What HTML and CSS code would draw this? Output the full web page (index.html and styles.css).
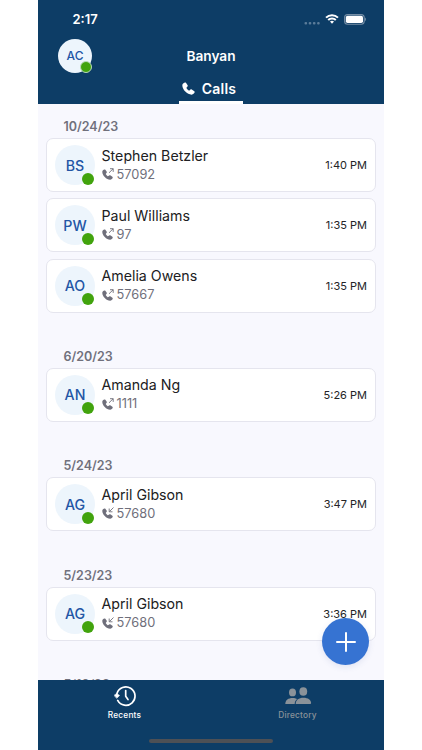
FILE: index.html
```html
<!DOCTYPE html>
<html lang="en">
<head>
  <meta charset="UTF-8">
  <title>Banyan - Calls</title>
  <link rel="stylesheet" href="styles.css">
</head>
<body>

  <!-- shared icons -->
  <svg class="icon-defs" aria-hidden="true">
    <symbol id="handset" viewBox="0 0 24 24">
      <path d="M5.200 1C3.200 1.700.6 3.600.6 6.200c0 8.200 9 17.200 17.200 17.200 2.600 0 4.900-2.300 5.600-4.300.3-.9 0-1.700-.7-2.200l-4.700-3.200c-.8-.5-1.700-.4-2.400.3l-1.700 1.500c-.5.4-1 .4-1.500.1-1.500-.9-3.100-2.500-4-4-.3-.5-.3-1 .1-1.500L10.100 8.400c.7-.7.8-1.600.3-2.400L7.300 1.600C6.800.9 6.100.7 5.200 1z"/>
    </symbol>
    <symbol id="outgoing" viewBox="0 0 12 12">
      <use href="#handset" x="0" y="1" width="11" height="11"/>
      <path class="arrow" d="M7 4.800 L11.200 .7 M8 .7 H11.200 V3.900"/>
    </symbol>
    <symbol id="incoming" viewBox="0 0 12 12">
      <use href="#handset" x="0" y="1" width="11" height="11"/>
      <path class="arrow" d="M11.500 .5 L7.500 4.500 M7.200 1.500 V4.800 H10.500"/>
    </symbol>
  </svg>

  <div class="phone">
    <header>
      <div class="status-bar">
        <span class="clock">2:17</span>
        <svg class="dots" viewBox="0 0 16 4" width="16" height="4">
          <rect x="0.500" y="1" width="2.600" height="2.400" rx="1"/>
          <rect x="4.700" y="1" width="2.600" height="2.400" rx="1"/>
          <rect x="8.900" y="1" width="2.600" height="2.400" rx="1"/>
          <rect x="13.100" y="1" width="2.600" height="2.400" rx="1"/>
        </svg>
        <svg class="wifi" viewBox="0 0 14 10" width="14" height="10">
          <path d="M1 3.600 A8.600 8.600 0 0 1 13 3.600"/>
          <path d="M3.200 6 A5.400 5.400 0 0 1 10.800 6"/>
          <path class="solid" d="M5 7.600 A2.900 2.900 0 0 1 9 7.600 L7 9.800 Z"/>
        </svg>
        <svg class="battery" viewBox="0 0 23 11" width="23" height="11">
          <rect class="case" x=".6" y=".6" width="19.600" height="9.600" rx="3"/>
          <rect class="level" x="1.800" y="1.800" width="17.200" height="7.200" rx="1.800"/>
          <path class="tip" d="M21 3.600 C22.300 4.200 22.300 6.600 21 7.200 Z"/>
        </svg>
      </div>
      <div class="title-bar">
        <div class="avatar small">AC<i class="online"></i></div>
        <h1>Banyan</h1>
      </div>
      <div class="tab">
        <svg width="13" height="13"><use href="#handset"/></svg>
        <span>Calls</span>
      </div>
    </header>

    <main>
      <section>
        <h2>10/24/23</h2>
        <div class="card">
          <div class="avatar">BS<i class="online"></i></div>
          <div class="who">
            <div class="name">Stephen Betzler</div>
            <div class="number"><svg width="12" height="12"><use href="#outgoing"/></svg>57092</div>
          </div>
          <time>1:40 PM</time>
        </div>
        <div class="card">
          <div class="avatar">PW<i class="online"></i></div>
          <div class="who">
            <div class="name">Paul Williams</div>
            <div class="number"><svg width="12" height="12"><use href="#outgoing"/></svg>97</div>
          </div>
          <time>1:35 PM</time>
        </div>
        <div class="card">
          <div class="avatar">AO<i class="online"></i></div>
          <div class="who">
            <div class="name">Amelia Owens</div>
            <div class="number"><svg width="12" height="12"><use href="#outgoing"/></svg>57667</div>
          </div>
          <time>1:35 PM</time>
        </div>
      </section>

      <section>
        <h2>6/20/23</h2>
        <div class="card">
          <div class="avatar">AN<i class="online"></i></div>
          <div class="who">
            <div class="name">Amanda Ng</div>
            <div class="number"><svg width="12" height="12"><use href="#outgoing"/></svg>1111</div>
          </div>
          <time>5:26 PM</time>
        </div>
      </section>

      <section>
        <h2>5/24/23</h2>
        <div class="card">
          <div class="avatar">AG<i class="online"></i></div>
          <div class="who">
            <div class="name">April Gibson</div>
            <div class="number"><svg width="12" height="12"><use href="#incoming"/></svg>57680</div>
          </div>
          <time>3:47 PM</time>
        </div>
      </section>

      <section>
        <h2>5/23/23</h2>
        <div class="card">
          <div class="avatar">AG<i class="online"></i></div>
          <div class="who">
            <div class="name">April Gibson</div>
            <div class="number"><svg width="12" height="12"><use href="#incoming"/></svg>57680</div>
          </div>
          <time>3:36 PM</time>
        </div>
      </section>

      <section>
        <h2>5/18/23</h2>
      </section>
    </main>

    <button class="add" aria-label="New call">
      <svg viewBox="0 0 20 20" width="20" height="20"><path d="M10 1 V19 M1 10 H19"/></svg>
    </button>

    <nav>
      <div class="nav-items">
        <a class="nav-item active">
          <svg class="history" viewBox="0 0 22 22" width="22" height="22">
            <path d="M3 8.400 A9.200 9.200 0 1 1 3.700 15.400"/>
            <path d="M11.700 5.600 V11.300 L14 14.500"/>
            <path class="head" d="M.2 10.200 L2.800 8.400 L5.600 10.400 L2.900 13.200 Z"/>
          </svg>
          <span>Recents</span>
        </a>
        <a class="nav-item">
          <svg class="people" viewBox="0 0 28 22" width="28" height="22">
            <ellipse cx="8.500" cy="7.400" rx="3.500" ry="3.900"/>
            <path d="M1.300 19 C1.300 14.900 4.400 12.900 8.500 12.900 C10.400 12.900 12 13.300 13.200 14.100 C11.500 15.400 10.700 17 10.700 19 Z"/>
            <ellipse cx="19.300" cy="6.500" rx="3.900" ry="4.300"/>
            <path d="M11.700 19 C11.700 14.900 14.800 12.700 19.400 12.700 C24 12.700 27.100 14.900 27.100 18 Q27.100 19 26.100 19 Z"/>
          </svg>
          <span>Directory</span>
        </a>
      </div>
      <div class="home-bar"></div>
    </nav>
  </div>

</body>
</html>
```

FILE: styles.css
```css
body {
  margin: 0;
  padding: 0;
  font-family: Inter, 'Liberation Sans', sans-serif;
  background: #fff;
}

.icon-defs {
  display: block;
  width: 0;
  height: 0;
}

.phone {
  position: relative;
  display: flex;
  flex-direction: column;
  width: 346px;
  height: 750px;
  margin: 0 auto;
  overflow: hidden;
  background: #f8f8fe;
}

svg {
  flex: none;
  fill: currentColor;
}

/* header */
header {
  flex: none;
  height: 104px;
  background: #0d3d66;
  color: #fff;
}

.status-bar {
  display: flex;
  align-items: center;
  height: 38px;
  padding: 0 17px 0 34.5px;
}

.clock {
  flex: 1;
  font-size: 13px;
  font-weight: 600;
}

.dots {
  margin: 7px 5px 0 0;
  color: #5b7c99;
}

.wifi {
  margin-right: 5px;
  fill: none;
  stroke: #fff;
  stroke-width: 2;
}

.wifi .solid {
  fill: #fff;
  stroke: none;
}

.battery .case {
  fill: none;
  stroke: #758ea6;
  stroke-width: 1.1;
}

.battery .tip {
  fill: #758ea6;
}

.title-bar {
  display: grid;
  grid-template-columns: 1fr auto 1fr;
  align-items: center;
  height: 35px;
  padding: 0 20px;
}

h1 {
  margin: 0;
  font-size: 13.7px;
  font-weight: 600;
}

.tab {
  display: flex;
  align-items: center;
  justify-content: center;
  gap: 7px;
  box-sizing: border-box;
  width: 64px;
  height: 31px;
  margin: 0 auto;
  padding: 2px 4px 0 0;
  border-bottom: 3px solid #fff;
  font-size: 14px;
  font-weight: 600;
  letter-spacing: 0.2px;
}

/* avatars */
.avatar {
  position: relative;
  display: flex;
  flex: none;
  align-items: center;
  justify-content: center;
  width: 40px;
  height: 40px;
  border-radius: 50%;
  background: #edf5fc;
  color: #2355a5;
  font-size: 14.2px;
  font-weight: 500;
}

.avatar.small {
  width: 34px;
  height: 34px;
  font-size: 12px;
}

.online {
  position: absolute;
  right: 1px;
  bottom: 0.5px;
  width: 12px;
  height: 12px;
  border-radius: 50%;
  background: #41a30d;
}

.small .online {
  right: 0;
  bottom: 0;
  width: 10px;
  height: 10px;
  border: 1px solid #b9d9b9;
}

/* call list */
main {
  flex: 1;
  min-height: 0;
  padding: 0 8px;
  overflow: hidden;
}

section {
  padding-bottom: 31.3px;
}

h2 {
  box-sizing: border-box;
  height: 24px;
  margin: 0;
  padding: 3px 0 0 17.5px;
  color: #70707c;
  font-size: 12.5px;
  font-weight: 600;
  line-height: 20px;
}

section:first-child h2 {
  height: 34.3px;
  padding-top: 13px;
}

.card {
  display: flex;
  align-items: center;
  box-sizing: border-box;
  height: 54px;
  padding: 0 8px;
  border: 1px solid #e5e5ee;
  border-radius: 7px;
  background: #fff;
}

.card + .card {
  margin-top: 6.2px;
}

.who {
  flex: 1;
  padding-left: 6.5px;
}

.name {
  color: #202022;
  font-size: 14.2px;
  line-height: 19px;
  margin-top: -1px;
}

.number {
  display: flex;
  align-items: center;
  gap: 3px;
  color: #6f6f7b;
  font-size: 12.8px;
  line-height: 19px;
}

.arrow {
  fill: none;
  stroke: currentColor;
  stroke-width: 0.9;
}

time {
  color: #242426;
  font-size: 11px;
}

.add {
  position: absolute;
  right: 15px;
  bottom: 85px;
  display: flex;
  align-items: center;
  justify-content: center;
  width: 47px;
  height: 47px;
  padding: 0;
  border: 0;
  border-radius: 50%;
  background: #3673d2;
  box-shadow: 0 2px 6px rgba(54, 80, 160, 0.12);
}

.add path {
  stroke: #fff;
  stroke-width: 2;
  stroke-linecap: round;
}

/* bottom navigation */
nav {
  flex: none;
  height: 70px;
  background: #0d3d66;
}

.nav-items {
  display: flex;
  height: 58px;
}

.nav-item {
  display: flex;
  flex: 1;
  flex-direction: column;
  align-items: center;
  gap: 3px;
  padding-top: 5px;
  color: #8a9299;
  font-size: 8.3px;
  font-weight: 500;
  line-height: 10px;
  letter-spacing: 0.2px;
}

.nav-item.active {
  color: #fff;
}

.history {
  fill: none;
  stroke: #fff;
  stroke-width: 1.7;
  stroke-linecap: round;
  stroke-linejoin: round;
}

.history .head {
  fill: #fff;
  stroke-width: 0.5;
}

.home-bar {
  width: 124px;
  height: 4px;
  margin: 1px auto 0;
  border-radius: 2px;
  background: #4d5055;
}
```
